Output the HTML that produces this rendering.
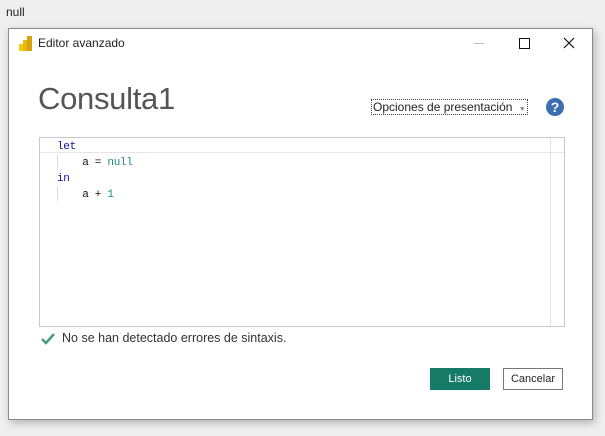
<!DOCTYPE html>
<html><head><style>
body{margin:0;width:605px;height:436px;background:#efefef;font-family:"Liberation Sans",sans-serif;position:relative;overflow:hidden}
.a{position:absolute}
.dlg{left:8px;top:28px;width:585px;height:392px;background:#fff;border:1px solid #8a8a8a;box-shadow:2px 3px 8px rgba(0,0,0,.25);box-sizing:border-box}
.code{font-family:"Liberation Mono",monospace;font-size:11px}
</style></head><body>
<div class="a" style="left:6px;top:5px;font-size:12px;color:#222">null</div>
<div class="a dlg"></div>
<svg class="a" style="left:18px;top:35px" width="15" height="17"><rect x="1" y="9" width="4" height="7" fill="#f2c811"/><rect x="5" y="5" width="4" height="11" fill="#e8b60d"/><rect x="9" y="1" width="5" height="15" fill="#d6a30a"/></svg>
<div class="a" style="left:38px;top:36px;font-size:12px;color:#222">Editor avanzado</div>
<div class="a" style="left:474px;top:43px;width:10px;height:1px;background:#bbb"></div>
<div class="a" style="left:519px;top:38px;width:9px;height:9px;border:1px solid #111"></div>
<svg class="a" style="left:563px;top:37px" width="12" height="12"><path d="M1 1L11 11M11 1L1 11" stroke="#111" stroke-width="1.2"/></svg>
<div class="a" style="left:38px;top:81px;font-size:31px;color:#555;letter-spacing:-0.3px">Consulta1</div>
<div class="a" style="left:371px;top:99px;width:157px;height:16px;border:1px dotted #444;font-size:12px;color:#222;line-height:15px;box-sizing:border-box;padding-left:1px">Opciones de presentación <span style="font-size:7px;color:#888;margin-left:3px">▼</span></div>
<div class="a" style="left:546px;top:98px;width:18px;height:18px;border-radius:50%;background:#3c6fb0;color:#fff;font-weight:bold;font-size:14px;text-align:center;line-height:18px">?</div>
<div class="a" style="left:39px;top:137px;width:526px;height:190px;border:1px solid #c8c8c8;box-sizing:border-box"></div>
<div class="a" style="left:40px;top:138px;width:524px;height:15px;border-bottom:1px solid #e4e4e4;box-sizing:border-box"></div>
<div class="a" style="left:550px;top:138px;width:1px;height:188px;background:#e0e0e0"></div>
<div class="a" style="left:57px;top:154px;width:1px;height:15px;background:#ddd"></div>
<div class="a" style="left:57px;top:186px;width:1px;height:15px;background:#ddd"></div>
<div class="a code" style="left:57px;top:139px;line-height:16px;color:#111;white-space:pre;letter-spacing:-0.3px"><span style="color:#1010a0">let</span>
    a = <span style="color:#1a8c8c">null</span>
<span style="color:#1010a0">in</span>
    a + <span style="color:#1a8c8c">1</span></div>
<svg class="a" style="left:40px;top:332px" width="16" height="14"><path d="M2 7L6 11L14 2" stroke="#4a9a80" stroke-width="2.5" fill="none"/></svg>
<div class="a" style="left:62px;top:331px;font-size:12.5px;color:#333">No se han detectado errores de sintaxis.</div>
<div class="a" style="left:430px;top:368px;width:60px;height:22px;background:#157a66;color:#fff;font-size:11px;text-align:center;line-height:22px">Listo</div>
<div class="a" style="left:503px;top:368px;width:60px;height:22px;border:1px solid #777;box-sizing:border-box;color:#222;font-size:11px;text-align:center;line-height:20px">Cancelar</div>
</body></html>
